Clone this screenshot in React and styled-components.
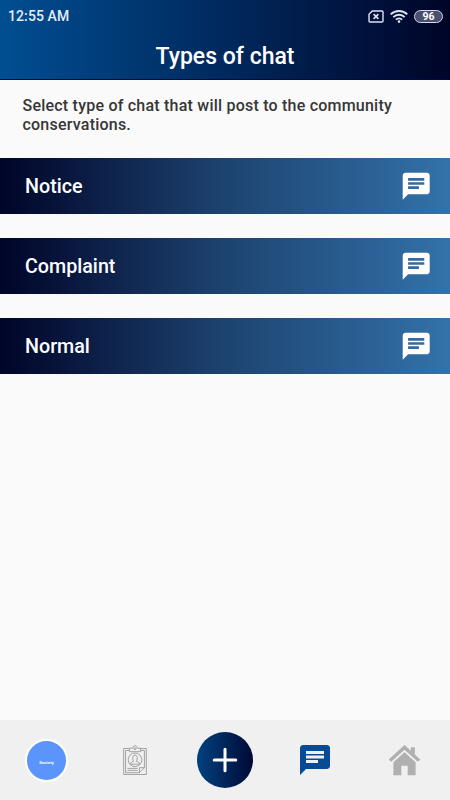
import React from "react";
import styled, { createGlobalStyle } from "styled-components";
import { MdChat } from "react-icons/md";

const GlobalStyle = createGlobalStyle`
    * {
        box-sizing: border-box;
    }
    body {
        margin: 0;
        font-family: Roboto, sans-serif;
    }
`;
const Container = styled.div`
    width: 450px;
    height: 800px;
    display: flex;
    flex-direction: column;
    overflow: hidden;
    background-color: #fafafa;
`;
const Header = styled.header`
    height: 80px;
    background: linear-gradient(to right, #004e92, #000428);
    border-bottom: 1px solid #000b45;
    color: white;
`;
const StatusBar = styled.div`
    height: 32px;
    padding: 0 7px 0 8px;
    display: flex;
    align-items: center;
    justify-content: space-between;
`;
const Time = styled.span`
    font-size: 14px;
    font-weight: 500;
    line-height: 16px;
    letter-spacing: 0.1px;
    color: #e3eefa;
`;
const StatusIcons = styled.div`
    display: flex;
    align-items: center;
    gap: 6px;
    color: #dfe3f3;

    svg {
        display: block;
    }
`;
const Battery = styled.span`
    width: 29px;
    height: 13px;
    display: flex;
    align-items: center;
    justify-content: center;
    border: 1.5px solid #d5d9ea;
    border-radius: 7px;
    background-color: #4b4e70;
    color: white;
    font-size: 10.5px;
    font-weight: 700;
    line-height: 10px;
    padding-top: 1px;
`;
const Title = styled.h1`
    margin: 0;
    padding-top: 1px;
    font-size: 23px;
    font-weight: 500;
    line-height: 47px;
    text-align: center;
`;
const Description = styled.p`
    height: 78px;
    margin: 0;
    padding: 16px 22.5px 0;
    color: #363636;
    font-size: 16px;
    font-weight: 500;
    line-height: 19px;
    letter-spacing: 0.22px;
`;
const List = styled.ul`
    flex: 1;
    margin: 0;
    padding: 0;
    list-style: none;
    display: flex;
    flex-direction: column;
    gap: 24.5px;
`;
const Item = styled.li`
    height: 55.5px;
    padding: 0 17.5px 0 25px;
    display: flex;
    align-items: center;
    justify-content: space-between;
    background: linear-gradient(to right, #000428, #1d4370 50%, #3372aa);
    color: white;
`;
const ItemTitle = styled.span`
    font-size: 19.7px;
    font-weight: 500;
    line-height: 24px;
    padding-top: 2px;
`;
const NavBar = styled.nav`
    height: 80px;
    display: grid;
    grid-template-columns: repeat(5, 1fr);
    align-items: center;
    justify-items: center;
    background-color: #f0f0f0;

    svg {
        display: block;
    }
`;
const Avatar = styled.div`
    width: 43px;
    height: 43px;
    margin-left: 3px;
    display: flex;
    align-items: center;
    justify-content: center;
    border: 2px solid white;
    border-radius: 50%;
    background-color: #5b95fb;
    color: white;
    font-size: 4.2px;
    font-weight: 700;
    line-height: 5px;
    letter-spacing: 0.1px;
    padding-top: 4px;
`;
const AddButton = styled.button`
    width: 56px;
    height: 56px;
    padding: 0;
    display: flex;
    align-items: center;
    justify-content: center;
    border: none;
    border-radius: 50%;
    background: linear-gradient(to right, #004180, #000a35);
    color: white;
`;

const SimIcon = () => (
    <svg width="16" height="13" viewBox="0 0 16 13" fill="none" stroke="currentColor">
        <path d="M4.3 1H14a1 1 0 0 1 1 1v9a1 1 0 0 1-1 1H2a1 1 0 0 1-1-1V4.3z" strokeWidth="1.4" />
        <path d="M5.6 4.1l4.8 4.8M10.4 4.1L5.6 8.9" strokeWidth="1.6" />
    </svg>
);

const WifiIcon = () => (
    <svg width="18" height="13" viewBox="0 0 18 13" fill="none" stroke="currentColor" strokeWidth="1.9">
        <path d="M.7 4.4a11.9 11.9 0 0 1 16.6 0" />
        <path d="M3.3 7.1a8.1 8.1 0 0 1 11.4 0" />
        <path d="M5.9 9.6a4.5 4.5 0 0 1 6.2 0" />
        <circle cx="9" cy="11.6" r="1.3" fill="currentColor" stroke="none" />
    </svg>
);

const ClipboardIcon = () => (
    <svg width="24" height="31" viewBox="0 0 24 31" fill="none" stroke="#999" strokeWidth="0.9">
        <path d="M6.5 3.5H.7v26h22.6v-26h-5.8" />
        <path d="M6.5 5.5H2.6v22.2h13.8l5-5V5.5h-3.9" />
        <path d="M16.4 27.7v-5h5" />
        <path d="M6.5 6.7V3.2h3.2C10 1.5 10.8.8 12 .8s2 .7 2.3 2.4h3.2v3.5z" />
        <circle cx="12" cy="3.7" r="1" />
        <circle cx="12" cy="14.8" r="6.8" />
        <path d="M7.2 19.2c.3-1.7 1.4-2.3 3.1-2.7v-1.3c-1.3-2.7-.6-5 1.7-5s3 2.3 1.7 5v1.3c1.7.4 2.8 1 3.1 2.7z" />
        <path d="M4.5 23.4h10.2M4.5 25.4h10.2" />
    </svg>
);

const PlusIcon = () => (
    <svg width="26" height="26" viewBox="0 0 26 26" stroke="currentColor" strokeWidth="3" strokeLinecap="round">
        <path d="M13 2.2v21.6M2.2 13h21.6" />
    </svg>
);

const HomeIcon = () => (
    <svg width="34" height="31" viewBox="0 0 34 31" fill="#b0b0b0">
        <path d="M16.5 0L22.8 5.8V2.2h4v7.3L32.3 14.6 29.8 16.8 16.5 4.7 3.2 16.8.7 14.6z" />
        <path d="M16.5 7.2L27.6 17.3V30.3H19.7V20.8H13.3V30.3H5.4V17.3z" />
    </svg>
);

const App = () => {
    return (
        <Container>
            <GlobalStyle />
            <Header>
                <StatusBar>
                    <Time>12:55 AM</Time>
                    <StatusIcons>
                        <SimIcon />
                        <WifiIcon />
                        <Battery>96</Battery>
                    </StatusIcons>
                </StatusBar>
                <Title>Types of chat</Title>
            </Header>
            <Description>
                Select type of chat that will post to the community conservations.
            </Description>
            <List>
                <Item>
                    <ItemTitle>Notice</ItemTitle>
                    <MdChat size={32.4} />
                </Item>
                <Item>
                    <ItemTitle>Complaint</ItemTitle>
                    <MdChat size={32.4} />
                </Item>
                <Item>
                    <ItemTitle>Normal</ItemTitle>
                    <MdChat size={32.4} />
                </Item>
            </List>
            <NavBar>
                <Avatar>Society</Avatar>
                <ClipboardIcon />
                <AddButton>
                    <PlusIcon />
                </AddButton>
                <MdChat size={36} color="#084b95" />
                <HomeIcon />
            </NavBar>
        </Container>
    );
};

export default App;
